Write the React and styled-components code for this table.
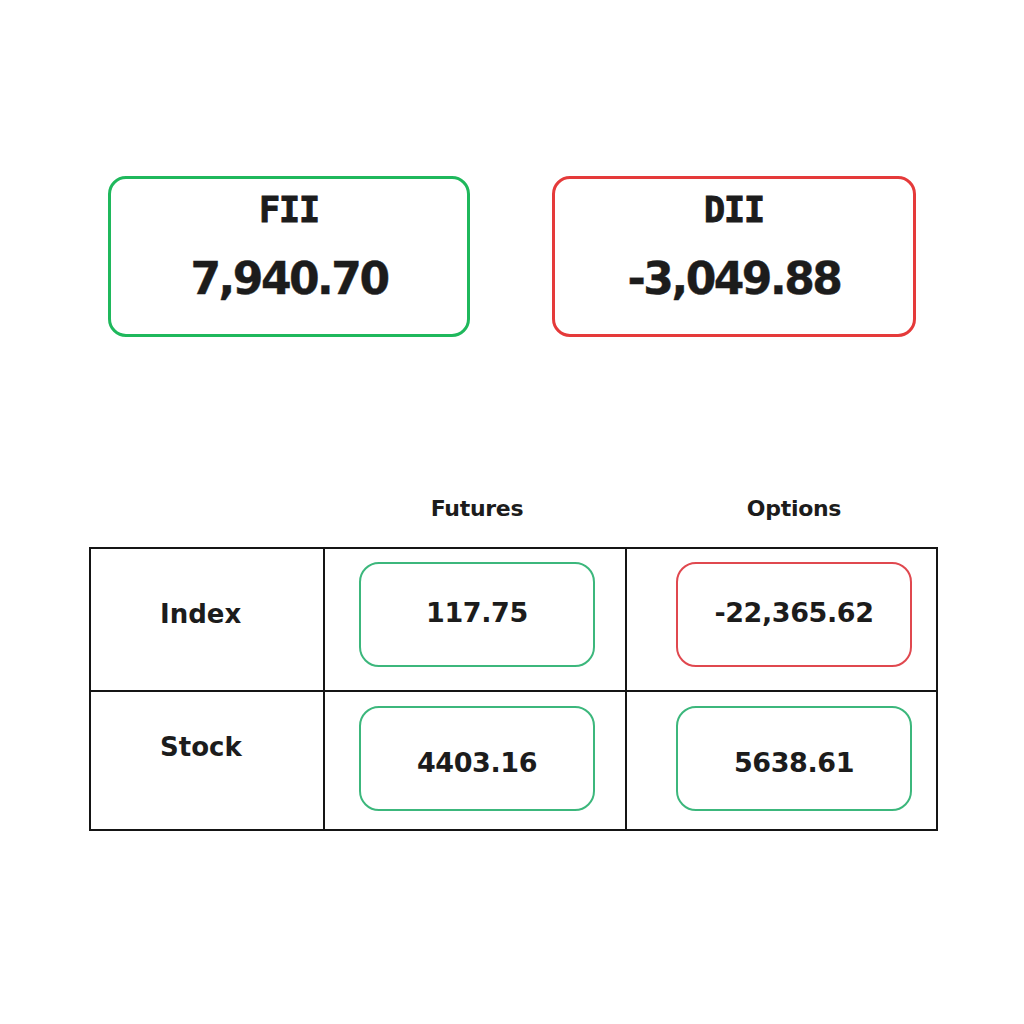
import React from 'react';
import styled, { createGlobalStyle } from 'styled-components';

const GlobalStyle = createGlobalStyle`
  html, body {
    margin: 0;
    padding: 0;
    background: #ffffff;
  }
  body {
    font-family: "DejaVu Sans", "Liberation Sans", sans-serif;
    color: #1c1c1c;
  }
`;

const Page = styled.div`
  width: 1024px;
  height: 1024px;
  box-sizing: border-box;
  padding-top: 176px;
  background: #ffffff;
`;

const CardRow = styled.div`
  display: flex;
  gap: 82px;
  padding-left: 108px;
`;

const Card = styled.div`
  width: ${(p) => p.w}px;
  height: 161px;
  box-sizing: border-box;
  border: 3.8px solid ${(p) => p.color};
  border-radius: 18px;
  display: flex;
  flex-direction: column;
  align-items: center;
  padding-top: 11px;
`;

const CardTitle = styled.div`
  font-family: "DejaVu Sans Mono", "DejaVu Sans", monospace;
  font-weight: 700;
  font-size: 35px;
  line-height: 40px;
  letter-spacing: -1px;
  -webkit-text-stroke: 1px #1c1c1c;
`;

const CardValue = styled.div`
  margin-top: 24px;
  font-weight: 700;
  font-size: 44px;
  line-height: 50px;
  letter-spacing: -2.5px;
  -webkit-text-stroke: 0.4px #1c1c1c;
`;

const TableWrap = styled.div`
  margin-top: 159px;
  padding-left: 89px;
`;

const HeaderRow = styled.div`
  display: grid;
  grid-template-columns: 234px 302px 313px;
  margin-bottom: 25px;
`;

const HeaderCell = styled.div`
  width: 236px;
  margin-left: ${(p) => p.offset}px;
  text-align: center;
  font-weight: 700;
  font-size: 22px;
  line-height: 26px;
  letter-spacing: -0.3px;
`;

const Grid = styled.div`
  width: 849px;
  box-sizing: border-box;
  display: grid;
  grid-template-columns: 232px 300px 309px;
  grid-template-rows: 141px 137px;
  gap: 2px;
  padding: 2px;
  background: #151515;
`;

const LabelCell = styled.div`
  background: #ffffff;
  box-sizing: border-box;
  padding-left: 69px;
  padding-top: ${(p) => p.top}px;
  font-weight: 700;
  font-size: 26px;
  line-height: 30px;
`;

const ValueCell = styled.div`
  background: #ffffff;
  box-sizing: border-box;
  padding-left: ${(p) => p.offset}px;
  padding-top: ${(p) => p.top}px;
`;

const ValueBox = styled.div`
  width: 236px;
  height: 105px;
  box-sizing: border-box;
  border: 2px solid ${(p) => (p.neg ? '#e0484f' : '#3cb77c')};
  border-radius: 20px;
  display: flex;
  align-items: center;
  justify-content: center;
  padding-top: ${(p) => (p.shift > 0 ? p.shift : 0)}px;
  padding-bottom: ${(p) => (p.shift < 0 ? -p.shift : 0)}px;
  font-weight: 700;
  font-size: 27px;
  line-height: 30px;
  letter-spacing: -0.4px;
`;

const rows = [
  { label: 'Index', labelTop: 50, boxTop: 13, shift: -4, futures: '117.75', options: '-22,365.62', optNeg: true },
  { label: 'Stock', labelTop: 40, boxTop: 14, shift: 8, futures: '4403.16', options: '5638.61', optNeg: false },
];

const App = () => (
  <>
    <GlobalStyle />
    <Page>
      <CardRow>
        <Card w={362} color="#1fb85c">
          <CardTitle>FII</CardTitle>
          <CardValue>7,940.70</CardValue>
        </Card>
        <Card w={364} color="#e53a3a">
          <CardTitle>DII</CardTitle>
          <CardValue>-3,049.88</CardValue>
        </Card>
      </CardRow>

      <TableWrap>
        <HeaderRow>
          <div />
          <HeaderCell offset={36}>Futures</HeaderCell>
          <HeaderCell offset={51}>Options</HeaderCell>
        </HeaderRow>
        <Grid>
          {rows.map((r) => (
            <React.Fragment key={r.label}>
              <LabelCell top={r.labelTop}>{r.label}</LabelCell>
              <ValueCell offset={34} top={r.boxTop}>
                <ValueBox shift={r.shift}>{r.futures}</ValueBox>
              </ValueCell>
              <ValueCell offset={49} top={r.boxTop}>
                <ValueBox neg={r.optNeg} shift={r.shift}>
                  {r.options}
                </ValueBox>
              </ValueCell>
            </React.Fragment>
          ))}
        </Grid>
      </TableWrap>
    </Page>
  </>
);

export default App;
